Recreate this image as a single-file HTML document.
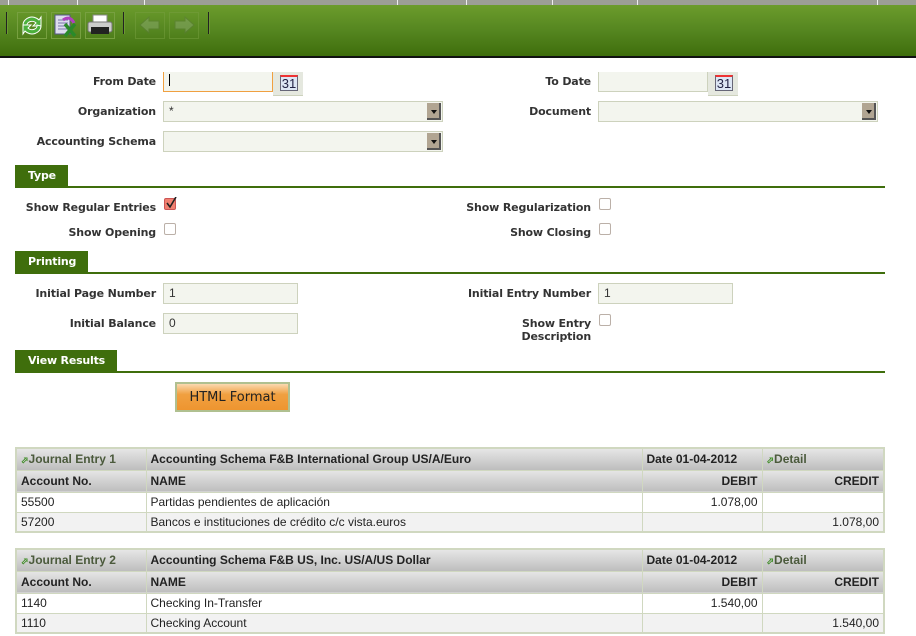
<!DOCTYPE html>
<html><head><meta charset="utf-8"><style>
*{margin:0;padding:0;box-sizing:border-box}
body{width:916px;height:636px;background:#fff;position:relative;overflow:hidden;font-family:"DejaVu Sans",sans-serif}
.abs{position:absolute}
.top{left:0;top:0;width:916px;height:5px;background:#9c9e96}
.top i{position:absolute;top:0;width:1px;height:5px;background:#eee}
.tb{left:0;top:5px;width:916px;height:53px;background:linear-gradient(#6c9c2c,#558620 50%,#3f6e0c);border-bottom:2px solid #111}
.sep{position:absolute;top:7px;width:2px;height:22px;background:#222;border-right:1px solid #6b9a32}
.btn{position:absolute;top:7px;width:30px;height:27px;border:1px solid #77a040}
.lbl{position:absolute;font-weight:bold;font-size:11px;color:#333;text-align:right;letter-spacing:-0.15px}
.inp{position:absolute;background:#f3f5ee;border:1px solid #cdd2bd;font-size:12px;color:#333;padding:2px 5px;height:21px;font-family:"Liberation Sans",sans-serif}
.dd{position:absolute;right:1px;top:1px;width:14px;height:17px;background:#b1a592;border-right:2px solid #555;border-bottom:2px solid #555}
.dd:after{content:"";position:absolute;left:4px;top:7px;border:3px solid transparent;border-top:4px solid #111}
.cal{position:absolute;width:30px;height:24px;background:#e5e8df;border-bottom:1px solid #cdd2bd}
.cal span{position:absolute;left:7px;top:3px;width:18px;height:16px;border:1px solid #667;border-top:2px solid #e33;background:#dde6f4;font:13px "Liberation Sans",sans-serif;line-height:13px;text-align:center;color:#224}
.sec{position:absolute;left:15px;width:870px;height:24px;border-bottom:2px solid #3f6e0c}
.sec b{display:inline-block;background:#3f6e0c;color:#fff;font-size:11px;height:22px;line-height:22px;padding:0 12px 0 13px;letter-spacing:-0.2px}
.cb{position:absolute;width:12px;height:12px;border:1px solid #bbb0a8;border-radius:2px;background:#fff}
table{position:absolute;left:15px;width:870px;border-collapse:collapse;border:2px solid #d0d8c0;font-family:"Liberation Sans",sans-serif;font-size:12px;color:#222}
td{border:1px solid #d0d8c0;padding:0 4px;height:20px}
tr.h td{background:linear-gradient(#e6e6e6,#bdbdbd);font-weight:bold;height:22px}
tr.h td.g{color:#4b5a3c}
tr.alt td{background:#f2f2f2}
.r{text-align:right}
.ar{color:#3a8a20;font-size:9px}
</style></head><body>
<div class="abs top"><i style="left:8px"></i><i style="left:77px"></i><i style="left:144px"></i><i style="left:397px"></i><i style="left:466px"></i><i style="left:552px"></i><i style="left:637px"></i><i style="left:877px"></i></div>
<div class="abs tb">
<div class="sep" style="left:6px"></div>
<div class="btn" style="left:17px"><svg width="28" height="25"><path d="M5 12a9 8 0 0 1 16-5l2-3v9h-8l3-3a5 4 0 0 0-9 3z" fill="#4bb03c" stroke="#fff" stroke-width="1"/><path d="M23 13a9 8 0 0 1-16 5l-2 3v-9h8l-3 3a5 4 0 0 0 9-3z" fill="#4bb03c" stroke="#fff" stroke-width="1"/></svg></div>
<div class="btn" style="left:51px"><svg width="28" height="25"><rect x="3" y="2" width="15" height="19" fill="#dde" stroke="#558"/><path d="M6 7h10M6 10h10M6 13h10M6 16h10" stroke="#77a"/><path d="M11 7q7-5 11 3" stroke="#b040c0" stroke-width="3" fill="none"/><path d="M13 11l10 12M23 11l-10 12" stroke="#2a8a2a" stroke-width="3.5"/></svg></div>
<div class="btn" style="left:85px"><svg width="28" height="25"><rect x="7" y="2" width="14" height="8" fill="#fff" stroke="#888"/><rect x="2" y="9" width="24" height="10" rx="2" fill="#ccc" stroke="#777"/><rect x="5" y="14" width="18" height="7" fill="#222"/></svg></div>
<div class="sep" style="left:123px"></div>
<div class="btn" style="left:135px;opacity:.5"><svg width="28" height="25"><path d="M4 12l9-8v4h10v8h-10v4z" fill="#8aa870" stroke="#5a7a3a"/></svg></div>
<div class="btn" style="left:169px;opacity:.5"><svg width="28" height="25"><path d="M24 12l-9-8v4H5v8h10v4z" fill="#8aa870" stroke="#5a7a3a"/></svg></div>
<div class="sep" style="left:208px"></div>
</div>

<div class="lbl" style="left:20px;top:75px;width:136px">From Date</div>
<div class="inp" style="left:163px;top:72px;width:110px;height:20px;border-color:#f0a040;border-top:none"><span style="border-left:1px solid #000;height:12px;display:inline-block"></span></div>
<div class="cal" style="left:273px;top:72px"><span>31</span></div>
<div class="lbl" style="left:450px;top:75px;width:141px">To Date</div>
<div class="inp" style="left:598px;top:72px;width:110px;height:20px;border-top:none"></div>
<div class="cal" style="left:708px;top:72px"><span>31</span></div>

<div class="lbl" style="left:20px;top:105px;width:136px">Organization</div>
<div class="inp" style="left:163px;top:101px;width:280px">*<div class="dd"></div></div>
<div class="lbl" style="left:450px;top:105px;width:141px">Document</div>
<div class="inp" style="left:598px;top:101px;width:280px"><div class="dd"></div></div>
<div class="lbl" style="left:20px;top:135px;width:136px">Accounting Schema</div>
<div class="inp" style="left:163px;top:131px;width:280px"><div class="dd"></div></div>

<div class="sec" style="top:164px"><b>Type</b></div>
<div class="lbl" style="left:10px;top:201px;width:146px">Show Regular Entries</div>
<div class="cb" style="left:164px;top:198px;background:#f08070;border-color:#c55"><svg width="12" height="12" style="position:absolute;left:0;top:-2px"><path d="M2 6l3 4 6-10" stroke="#222" stroke-width="1.6" fill="none"/></svg></div>
<div class="lbl" style="left:10px;top:226px;width:146px">Show Opening</div>
<div class="cb" style="left:164px;top:223px"></div>
<div class="lbl" style="left:440px;top:201px;width:151px">Show Regularization</div>
<div class="cb" style="left:599px;top:198px"></div>
<div class="lbl" style="left:440px;top:226px;width:151px">Show Closing</div>
<div class="cb" style="left:599px;top:223px"></div>

<div class="sec" style="top:250px"><b>Printing</b></div>
<div class="lbl" style="left:10px;top:287px;width:146px">Initial Page Number</div>
<div class="inp" style="left:163px;top:283px;width:135px">1</div>
<div class="lbl" style="left:10px;top:317px;width:146px">Initial Balance</div>
<div class="inp" style="left:163px;top:313px;width:135px">0</div>
<div class="lbl" style="left:440px;top:287px;width:151px">Initial Entry Number</div>
<div class="inp" style="left:598px;top:283px;width:135px">1</div>
<div class="lbl" style="left:440px;top:317px;width:151px;line-height:13px">Show Entry<br>Description</div>
<div class="cb" style="left:599px;top:314px"></div>

<div class="sec" style="top:349px"><b>View Results</b></div>
<div class="abs" style="left:175px;top:382px;width:115px;height:30px;border:2px solid #b0c090;background:linear-gradient(#fbd9b0,#f0a040 40%,#ee9530);font-size:13px;text-align:center;line-height:27px;color:#222">HTML Format</div>

<table style="top:447px">
<colgroup><col style="width:130px"><col style="width:496px"><col style="width:120px"><col></colgroup>
<tr class="h"><td class="g"><span class="ar">&#11008;</span>Journal Entry 1</td><td>Accounting Schema F&amp;B International Group US/A/Euro</td><td>Date 01-04-2012</td><td class="g"><span class="ar">&#11008;</span>Detail</td></tr>
<tr class="h"><td>Account No.</td><td>NAME</td><td class="r">DEBIT</td><td class="r">CREDIT</td></tr>
<tr><td>55500</td><td>Partidas pendientes de aplicación</td><td class="r">1.078,00</td><td></td></tr>
<tr class="alt"><td>57200</td><td>Bancos e instituciones de crédito c/c vista.euros</td><td></td><td class="r">1.078,00</td></tr>
</table>
<table style="top:548px">
<colgroup><col style="width:130px"><col style="width:496px"><col style="width:120px"><col></colgroup>
<tr class="h"><td class="g"><span class="ar">&#11008;</span>Journal Entry 2</td><td>Accounting Schema F&amp;B US, Inc. US/A/US Dollar</td><td>Date 01-04-2012</td><td class="g"><span class="ar">&#11008;</span>Detail</td></tr>
<tr class="h"><td>Account No.</td><td>NAME</td><td class="r">DEBIT</td><td class="r">CREDIT</td></tr>
<tr><td>1140</td><td>Checking In-Transfer</td><td class="r">1.540,00</td><td></td></tr>
<tr class="alt"><td>1110</td><td>Checking Account</td><td></td><td class="r">1.540,00</td></tr>
</table>
</body></html>
